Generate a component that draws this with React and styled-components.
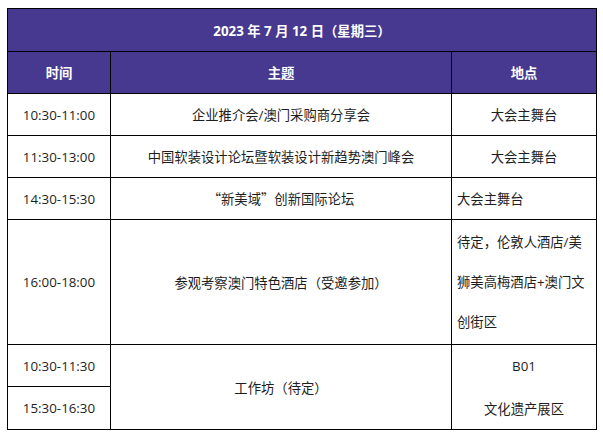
import React from "react";
import styled, { createGlobalStyle } from "styled-components";

const Global = createGlobalStyle`
  html, body { margin: 0; padding: 0; background: #fff; }
  body { font-family: "Open Sans", "Noto Sans CJK SC", sans-serif; }
`;

const Page = styled.div`
  padding: 8px 0 0 7px;
`;

const Table = styled.table`
  border-collapse: collapse;
  table-layout: fixed;
  width: 589px;
  font-size: 13.33px;
  color: #1e1e1e;
  font-family: "Open Sans", "Noto Sans CJK SC", sans-serif;
  td, th { border: 1px solid #000; padding: 0; }
`;

const TitleCell = styled.th`
  background: #47398f;
  color: #fff;
  font-weight: 700;
  height: 42px;
  text-align: center;
`;

const HeadCell = styled.th`
  background: #47398f;
  color: #fff;
  font-weight: 700;
  height: 41px;
  text-align: center;
`;

const Cell = styled.td`
  height: ${(p) => p.$h || 41}px;
  text-align: ${(p) => (p.$left ? "left" : "center")};
  padding-left: ${(p) => (p.$left ? "5px" : "0")} !important;
  vertical-align: middle;
`;

const Loose = styled.div`
  line-height: 40px;
  padding-right: 6px;
`;

const Stack = styled.div`
  display: flex;
  flex-direction: column;
  align-items: center;
  gap: 24px;
`;

const Cjk = styled.span`
  font-family: "Noto Sans CJK SC", sans-serif;
`;

const rows = [
  ["10:30-11:00", "企业推介会/澳门采购商分享会", "大会主舞台", false],
  ["11:30-13:00", "中国软装设计论坛暨软装设计新趋势澳门峰会", "大会主舞台", false],
  [
    "14:30-15:30",
    <>
      <Cjk>“</Cjk>新美域<Cjk>”</Cjk>创新国际论坛
    </>,
    "大会主舞台",
    true,
  ],
];

export default function App() {
  return (
    <>
      <Global />
      <Page>
        <Table>
          <colgroup>
            <col style={{ width: 103 }} />
            <col style={{ width: 341 }} />
            <col style={{ width: 145 }} />
          </colgroup>
          <thead>
            <tr>
              <TitleCell colSpan={3}>2023 年 7 月 12 日（星期三）</TitleCell>
            </tr>
            <tr>
              <HeadCell>时间</HeadCell>
              <HeadCell>主题</HeadCell>
              <HeadCell>地点</HeadCell>
            </tr>
          </thead>
          <tbody>
            {rows.map(([t, s, l, left]) => (
              <tr key={t}>
                <Cell>{t}</Cell>
                <Cell>{s}</Cell>
                <Cell $left={left}>{l}</Cell>
              </tr>
            ))}
            <tr>
              <Cell $h={124}>16:00-18:00</Cell>
              <Cell>参观考察澳门特色酒店（受邀参加）</Cell>
              <Cell $left>
                <Loose>待定，伦敦人酒店/美狮美高梅酒店+澳门文创街区</Loose>
              </Cell>
            </tr>
            <tr>
              <Cell>10:30-11:30</Cell>
              <Cell rowSpan={2}>工作坊（待定）</Cell>
              <Cell rowSpan={2}>
                <Stack>
                  <span>B01</span>
                  <span>文化遗产展区</span>
                </Stack>
              </Cell>
            </tr>
            <tr>
              <Cell $h={42}>15:30-16:30</Cell>
            </tr>
          </tbody>
        </Table>
      </Page>
    </>
  );
}
